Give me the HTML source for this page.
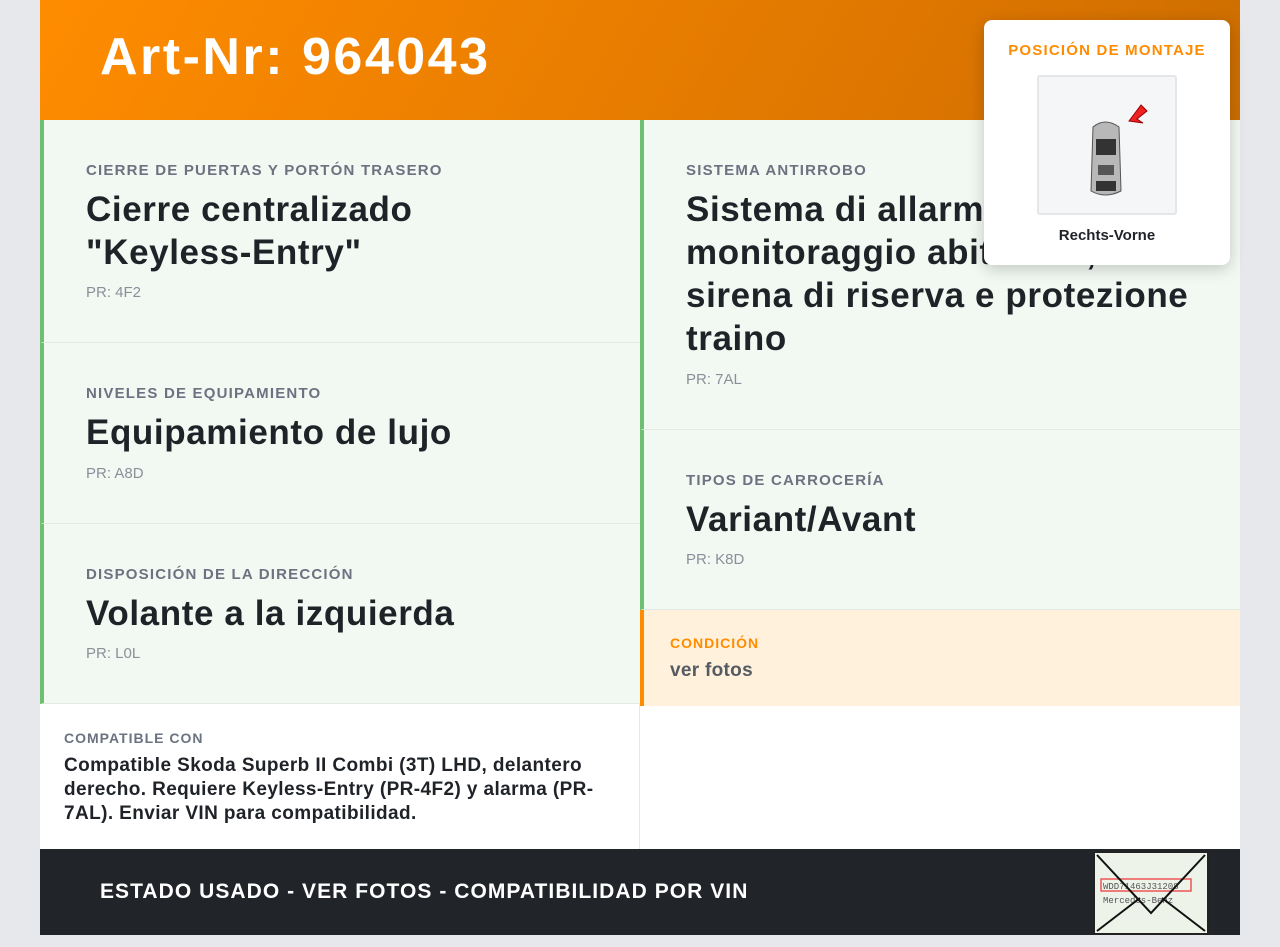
<!DOCTYPE html>
<html><head><meta charset="utf-8"><style>
*{margin:0;padding:0;box-sizing:border-box}
body{width:1280px;height:947px;background:#e6e8eb;font-family:"Liberation Sans",sans-serif;position:relative;overflow:hidden}
.page{position:absolute;left:40px;top:0;width:1200px;height:935px;background:#fff}
.hdr{position:absolute;left:0;top:0;width:1200px;height:120px;background:linear-gradient(120deg,#ff8c00,#d97300 80%,#cc6e00)}
.hdr h1{position:absolute;left:60px;top:27px;color:#fff;font-size:52px;font-weight:bold;letter-spacing:2.5px}
.card{position:absolute;background:#f2f8f2;border-left:4px solid #6cc070;border-bottom:1px solid #e3eae3}
.lab{position:absolute;left:42px;font-size:15px;font-weight:bold;color:#6b7280;letter-spacing:1.2px}
.val{position:absolute;left:42px;font-size:35px;font-weight:bold;color:#1f2328;line-height:43px;letter-spacing:0.6px}
.pr{position:absolute;left:42px;font-size:15px;color:#8a9099}
.pop{position:absolute;left:984px;top:20px;width:246px;height:245px;background:#fff;border-radius:8px;box-shadow:0 4px 16px rgba(0,0,0,.2)}
.foot{position:absolute;left:0;top:849px;width:1200px;height:86px;background:#212429}
</style></head><body>
<div class="page">
<div class="hdr"><h1>Art-Nr: 964043</h1></div>
<div class="card" style="left:0;top:120px;width:600px;height:223px"><div class="lab" style="top:42px">CIERRE DE PUERTAS Y PORTÓN TRASERO</div><div class="val" style="top:68px">Cierre centralizado<br>"Keyless-Entry"</div><div class="pr" style="top:164px">PR: 4F2</div></div>
<div class="card" style="left:0;top:343px;width:600px;height:181px"><div class="lab" style="top:42px">NIVELES DE EQUIPAMIENTO</div><div class="val" style="top:68px">Equipamiento de lujo</div><div class="pr" style="top:122px">PR: A8D</div></div>
<div class="card" style="left:0;top:524px;width:600px;height:180px"><div class="lab" style="top:42px">DISPOSICIÓN DE LA DIRECCIÓN</div><div class="val" style="top:68px">Volante a la izquierda</div><div class="pr" style="top:121px">PR: L0L</div></div>
<div class="card" style="left:600px;top:120px;width:600px;height:310px"><div class="lab" style="top:42px">SISTEMA ANTIRROBO</div><div class="val" style="top:68px">Sistema di allarme con<br>monitoraggio abitacolo,<br>sirena di riserva e protezione<br>traino</div><div class="pr" style="top:251px">PR: 7AL</div></div>
<div class="card" style="left:600px;top:430px;width:600px;height:180px"><div class="lab" style="top:42px">TIPOS DE CARROCERÍA</div><div class="val" style="top:68px">Variant/Avant</div><div class="pr" style="top:121px">PR: K8D</div></div>
<div style="position:absolute;left:600px;top:610px;width:600px;height:96px;background:#fff1dc;border-left:4px solid #ff8c00">
<div style="position:absolute;left:26px;top:25px;font-size:14px;font-weight:bold;color:#ff8c00;letter-spacing:1px">CONDICIÓN</div>
<div style="position:absolute;left:26px;top:50px;font-size:19px;font-weight:bold;color:#555b63;letter-spacing:0.3px">ver fotos</div></div>
<div style="position:absolute;left:0;top:704px;width:600px;height:145px;border-right:1px solid #e5e7eb">
<div style="position:absolute;left:24px;top:26px;font-size:14px;font-weight:bold;color:#6b7280;letter-spacing:1px">COMPATIBLE CON</div>
<div style="position:absolute;left:24px;top:50px;width:560px;font-size:19px;font-weight:bold;color:#1f2328;line-height:24px;letter-spacing:0.4px">Compatible Skoda Superb II Combi (3T) LHD, delantero derecho. Requiere Keyless-Entry (PR-4F2) y alarma (PR-7AL). Enviar VIN para compatibilidad.</div></div>
<div class="foot"><div style="position:absolute;left:60px;top:31px;color:#fff;font-size:21px;font-weight:bold;letter-spacing:1.05px">ESTADO USADO - VER FOTOS - COMPATIBILIDAD POR VIN</div>
<div style="position:absolute;left:1053px;top:2px;width:116px;height:84px;background:#eef3ea;border:2px solid #222">
<svg width="112" height="80" viewBox="0 0 112 80"><rect x="6" y="26" width="90" height="12" fill="none" stroke="#e55" stroke-width="1.5"/><text x="8" y="36" font-size="9" font-family="Liberation Mono" fill="#555">WDD71463J31208</text><text x="8" y="50" font-size="9" font-family="Liberation Mono" fill="#555">Mercedes-Benz</text><path d="M2 2 L56 60 L110 2 M2 78 L45 45 M110 78 L67 45" stroke="#111" stroke-width="2" fill="none"/></svg></div></div>
</div>
<div class="pop">
<div style="position:absolute;top:22px;width:100%;text-align:center;font-size:15px;font-weight:bold;color:#ff8c00;letter-spacing:1.2px">POSICIÓN DE MONTAJE</div>
<div style="position:absolute;left:53px;top:55px;width:140px;height:140px;background:#f5f6f8;border:2px solid #e4e6ea;border-radius:3px">
<svg width="136" height="136" viewBox="0 0 136 136"><path d="M54 50 Q66 40 80 50 L82 114 Q66 122 52 114 Z" fill="#b8b8b8" stroke="#555"/><rect x="57" y="62" width="20" height="16" fill="#333"/><rect x="59" y="88" width="16" height="10" fill="#555"/><rect x="57" y="104" width="20" height="10" fill="#333"/><path d="M90 44 L102 28 L108 34 L98 42 L104 46 Z" fill="#e22" stroke="#900"/></svg></div>
<div style="position:absolute;top:207px;width:100%;text-align:center;font-size:15px;font-weight:bold;color:#1f2328">Rechts-Vorne</div>
</div>
</body></html>
